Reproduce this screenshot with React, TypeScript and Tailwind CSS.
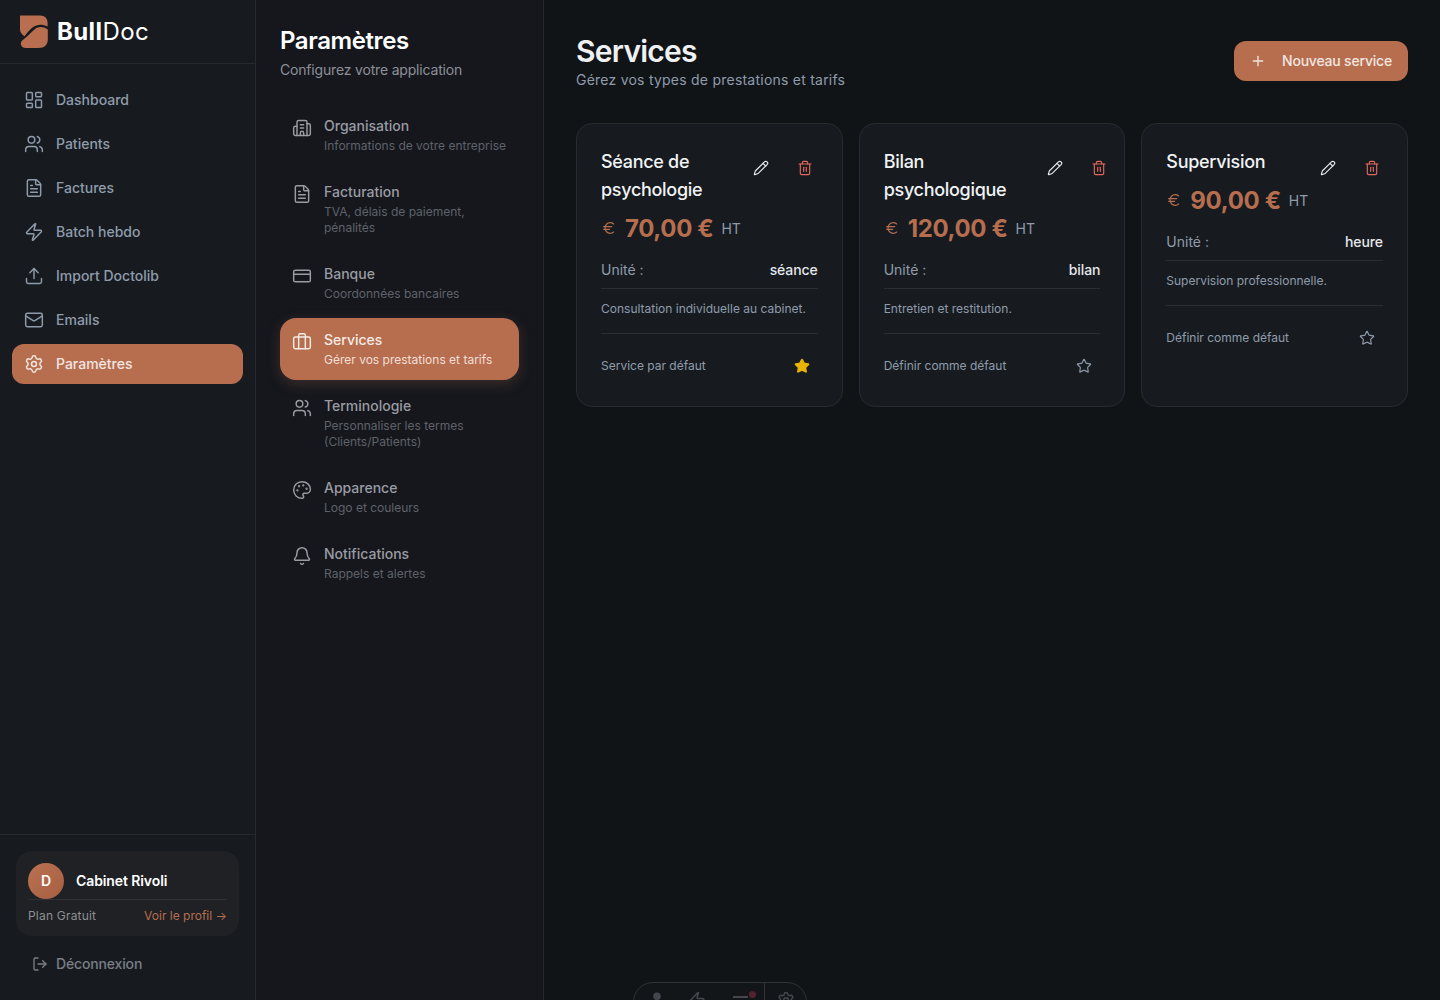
import {
  Bell,
  Briefcase,
  Building2,
  CreditCard,
  Euro,
  FileText,
  LayoutDashboard,
  LogOut,
  Mail,
  Palette,
  Pencil,
  Plus,
  Settings,
  Star,
  Trash2,
  Upload,
  User,
  Users,
  Zap,
  type LucideIcon,
} from "lucide-react";

const mainNav: { label: string; icon: LucideIcon; active?: boolean }[] = [
  { label: "Dashboard", icon: LayoutDashboard },
  { label: "Patients", icon: Users },
  { label: "Factures", icon: FileText },
  { label: "Batch hebdo", icon: Zap },
  { label: "Import Doctolib", icon: Upload },
  { label: "Emails", icon: Mail },
  { label: "Paramètres", icon: Settings, active: true },
];

const settingsNav: { label: string; sub: string; icon: LucideIcon; active?: boolean }[] = [
  { label: "Organisation", sub: "Informations de votre entreprise", icon: Building2 },
  { label: "Facturation", sub: "TVA, délais de paiement, pénalités", icon: FileText },
  { label: "Banque", sub: "Coordonnées bancaires", icon: CreditCard },
  { label: "Services", sub: "Gérer vos prestations et tarifs", icon: Briefcase, active: true },
  { label: "Terminologie", sub: "Personnaliser les termes (Clients/Patients)", icon: Users },
  { label: "Apparence", sub: "Logo et couleurs", icon: Palette },
  { label: "Notifications", sub: "Rappels et alertes", icon: Bell },
];

const services = [
  { name: "Séance de psychologie", price: "70,00 €", unit: "séance", desc: "Consultation individuelle au cabinet.", isDefault: true },
  { name: "Bilan psychologique", price: "120,00 €", unit: "bilan", desc: "Entretien et restitution.", isDefault: false },
  { name: "Supervision", price: "90,00 €", unit: "heure", desc: "Supervision professionnelle.", isDefault: false },
];

function Logo() {
  return (
    <svg width="30" height="35" viewBox="19 14 30 35" aria-hidden>
      <path
        d="M20 15.5H40C45 15.5 47.6 18.5 47.6 23V26.6C41.5 23.4 36 24.4 31.5 28.2C28.6 30.7 26.6 33.4 24.6 36.2C22 34.6 20 32.4 20 29.5Z"
        fill="#b96f4f"
      />
      <path
        d="M47.8 29.6C42 25.8 37.5 26.6 33.4 30.4C30.2 33.4 26.4 37 22 40.8C19.4 43.6 21.4 48 25.6 48H38.5C44.5 48 47.8 44.6 47.8 39.5Z"
        fill="#b96f4f"
      />
    </svg>
  );
}

function Sidebar() {
  return (
    <aside className="flex h-full w-[256px] shrink-0 flex-col border-r border-[#262a30] bg-[#171b20]">
      <div className="flex h-[64px] shrink-0 items-center gap-2 border-b border-[#262a30] pl-[19px]">
        <Logo />
        <span className="text-[24px] leading-8 tracking-[0.4px] text-white">
          <span className="font-bold">Bull</span>
          <span className="font-normal">Doc</span>
        </span>
      </div>
      <nav className="flex flex-1 flex-col gap-1 px-3 pt-4">
        {mainNav.map((item) => (
          <a
            key={item.label}
            className={`flex h-10 items-center gap-3 rounded-xl px-3 text-sm font-medium ${
              item.active ? "bg-[#b76e4f] text-[#f1e6e0]" : "text-[#8f9bab]"
            }`}
          >
            <item.icon size={20} strokeWidth={1.75} />
            {item.label}
          </a>
        ))}
      </nav>
      <div className="shrink-0 border-t border-[#262a30] px-4 pt-4 pb-[26px]">
        <div className="rounded-2xl bg-[#1f2125] px-3 pt-3 pb-3">
          <div className="flex items-center gap-3 border-b border-[#2e3034]">
            <div className="flex h-9 w-9 items-center justify-center rounded-full bg-gradient-to-br from-[#bb7252] to-[#a55f41] text-sm font-semibold text-white">
              D
            </div>
            <span className="text-sm font-semibold tracking-[-0.1px] text-white">Cabinet Rivoli</span>
          </div>
          <div className="mt-2 flex items-center justify-between text-xs leading-4">
            <span className="tracking-[0.2px] text-[#8d8f94]">Plan Gratuit</span>
            <span className="text-[#b76e4f]">Voir le profil →</span>
          </div>
        </div>
        <div className="mt-[18px] flex h-5 items-center gap-2 pl-4 text-sm font-medium tracking-[-0.15px] text-[#7b7e85]">
          <LogOut size={16} strokeWidth={2} />
          Déconnexion
        </div>
      </div>
    </aside>
  );
}

function SettingsPanel() {
  return (
    <section className="flex h-full w-[288px] shrink-0 flex-col border-r border-[#24272d] bg-[#15171d] px-6 pt-[25px]">
      <h2 className="text-2xl font-semibold tracking-[-0.4px] text-white">Paramètres</h2>
      <p className="mt-[3px] text-sm tracking-[-0.18px] text-[#8d9097]">Configurez votre application</p>
      <div className="mt-6 flex flex-col gap-1">
        {settingsNav.map((item) => (
          <a
            key={item.label}
            className={`flex gap-3 rounded-2xl px-3 py-3 ${
              item.active ? "bg-[#b76e4f] text-[#f5ebe5] shadow-[0_4px_14px_rgba(183,110,79,0.25)]" : "text-[#9a9ca3]"
            }`}
          >
            <item.icon size={20} strokeWidth={1.75} className="mt-0.5 shrink-0" />
            <span className="min-w-0">
              <span className="block text-sm leading-5 font-medium">{item.label}</span>
              <span
                className={`mt-0.5 block text-xs leading-4 ${item.active ? "text-[#f0dfd6]" : "text-[#5f6269]"}`}
              >
                {item.sub}
              </span>
            </span>
          </a>
        ))}
      </div>
    </section>
  );
}

function ServiceCard({ service }: { service: (typeof services)[number] }) {
  return (
    <div className="rounded-2xl border border-[#272b31] bg-[#171b20] p-6">
      <div className="flex items-start">
        <div>
          <h3 className="text-lg font-medium tracking-[-0.3px] text-[#f1f3f5]">{service.name}</h3>
          <div className="mt-2 flex h-8 items-center gap-2 whitespace-nowrap">
            <Euro size={16} strokeWidth={1.75} className="shrink-0 text-[#b76e4f]" />
            <span className="pt-[2px] text-2xl font-bold tracking-[-0.35px] text-[#b76e4f]">{service.price}</span>
            <span className="pt-px text-sm text-[#8f9bab]">HT</span>
          </div>
        </div>
        <div className="flex shrink-0 gap-1">
          <button type="button" className="flex h-10 w-10 items-center justify-center text-[#e5e7eb]">
            <Pencil size={16} strokeWidth={1.75} />
          </button>
          <button type="button" className="flex h-10 w-10 items-center justify-center text-[#e0675a]">
            <Trash2 size={16} strokeWidth={1.75} />
          </button>
        </div>
      </div>
      <div className="mt-4 flex justify-between border-b border-[#2a2e34] pb-2 text-sm">
        <span className="text-[#8f9bab]">Unité :</span>
        <span className="font-medium tracking-[-0.1px] text-[#e5e7eb]">{service.unit}</span>
      </div>
      <p className="mt-3 border-b border-[#2a2e34] pb-4 text-xs leading-4 text-[#8f9bab]">{service.desc}</p>
      <div className="mt-4 flex h-8 items-center justify-between text-xs text-[#8f9bab]">
        <span>{service.isDefault ? "Service par défaut" : "Définir comme défaut"}</span>
        <span className="flex h-8 w-8 items-center justify-center">
          {service.isDefault ? (
            <Star size={16} fill="#eab308" className="text-[#eab308]" />
          ) : (
            <Star size={16} strokeWidth={1.75} />
          )}
        </span>
      </div>
    </div>
  );
}

function DevToolbar() {
  return (
    <div className="absolute bottom-[-30px] left-[633px] flex h-12 w-[174px] items-start rounded-[20px] border border-[#2f3338] bg-[#131619] text-[#44484e]">
      <div className="flex h-full flex-1 items-start pt-[8px] pl-[14px]">
        <User size={18} fill="#44484e" />
        <Zap size={18} className="ml-[22px]" />
        <span className="relative mt-[5px] ml-[27px] h-[2px] w-[15px] bg-[#44484e]">
          <span className="absolute -top-[5px] -right-[8px] h-[7px] w-[7px] rounded-full bg-[#54222f]" />
        </span>
      </div>
      <div className="flex h-full w-[42px] justify-center border-l border-[#2f3338] pt-[8px]">
        <Settings size={18} />
      </div>
    </div>
  );
}

export default function App() {
  return (
    <div className="relative flex h-screen overflow-hidden bg-[#111417] font-['Inter',sans-serif]">
      <Sidebar />
      <SettingsPanel />
      <main className="min-w-0 flex-1 px-8 pt-[33px]">
        <div className="flex items-start justify-between">
          <div>
            <h1 className="text-[30px] leading-9 font-semibold tracking-tight text-[#eef0f2]">Services</h1>
            <p className="mt-px text-sm leading-5 tracking-[0.23px] text-[#8f9bab]">Gérez vos types de prestations et tarifs</p>
          </div>
          <button
            type="button"
            className="mt-2 flex h-10 w-[174px] items-center gap-4 rounded-xl bg-[#b76e4f] pl-4 text-sm font-medium tracking-[-0.2px] text-[#f1e6e0]"
          >
            <Plus size={16} strokeWidth={2} />
            Nouveau service
          </button>
        </div>
        <div className="mt-[33px] grid grid-cols-3 gap-4">
          {services.map((s) => (
            <ServiceCard key={s.name} service={s} />
          ))}
        </div>
      </main>
      <DevToolbar />
    </div>
  );
}
